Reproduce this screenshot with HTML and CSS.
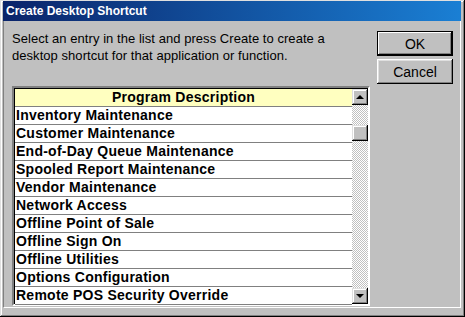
FILE: index.html
```html
<!DOCTYPE html>
<html lang="en">
<head>
    <meta charset="UTF-8">
    <title>Create Desktop Shortcut</title>
    <link rel="stylesheet" href="styles.css">
</head>
<body>
    <!-- Dialog Window -->
    <div class="window">
        <div class="title-bar">Create Desktop Shortcut</div>

        <div class="client">
            <div class="left-col">
                <p class="intro">Select an entry in the list and press Create to create a desktop shortcut for that application or function.</p>

                <!-- Program List -->
                <div class="list-box">
                    <div class="list-rows">
                        <div class="list-header">Program Description</div>
                        <div class="list-row">Inventory Maintenance</div>
                        <div class="list-row">Customer Maintenance</div>
                        <div class="list-row">End-of-Day Queue Maintenance</div>
                        <div class="list-row">Spooled Report Maintenance</div>
                        <div class="list-row">Vendor Maintenance</div>
                        <div class="list-row">Network Access</div>
                        <div class="list-row">Offline Point of Sale</div>
                        <div class="list-row">Offline Sign On</div>
                        <div class="list-row">Offline Utilities</div>
                        <div class="list-row">Options Configuration</div>
                        <div class="list-row">Remote POS Security Override</div>
                    </div>
                    <div class="scrollbar">
                        <div class="scroll-btn"><span class="arrow-up"></span></div>
                        <div class="scroll-track">
                            <div class="scroll-thumb"></div>
                        </div>
                        <div class="scroll-btn"><span class="arrow-down"></span></div>
                    </div>
                </div>
            </div>

            <!-- Buttons -->
            <div class="right-col">
                <button class="btn btn-default">OK</button>
                <button class="btn">Cancel</button>
            </div>
        </div>
    </div>
</body>
</html>
```

FILE: styles.css
```css
/* Base Reset */
* {
    margin: 0;
    padding: 0;
    box-sizing: border-box;
}

body {
    font-family: "Liberation Sans", Arial, sans-serif;
    font-size: 13px;
    color: #000;
    background-color: #c0c0c0;
}

/* Window Frame */
.window {
    width: 465px;
    height: 317px;
    display: flex;
    flex-direction: column;
    padding: 1px 4px 9px 3px;
    background-color: #c0c0c0;
    box-shadow: inset -1px -1px #000, inset 1px 1px #dfdfdf,
                inset -2px -2px #808080, inset 2px 2px #fff;
}

.title-bar {
    height: 20px;
    padding: 3px 0 0 3px;
    color: #fff;
    font-weight: bold;
    font-size: 12px;
    background: linear-gradient(to right, #0a246a, #1a7fd4);
}

.client {
    flex: 1;
    display: flex;
    gap: 7px;
    padding: 9px 0 0 8px;
    border-left: 1px solid #808080;
    border-right: 1px solid #fff;
    border-bottom: 1px solid #fff;
}

/* Left Column */
.left-col {
    width: 358px;
}

.intro {
    line-height: 17px;
    letter-spacing: 0.05px;
    margin-bottom: 22px;
}

.list-box {
    height: 220px;
    display: flex;
    background-color: #fff;
    border: 2px solid;
    border-color: #808080 #fff #fff #808080;
    box-shadow: inset 1px 1px #000;
}

.list-rows {
    flex: 1;
    padding: 1px 0 0 1px;
}

.list-header {
    height: 18px;
    line-height: 17px;
    text-align: center;
    font-size: 14px;
    letter-spacing: 0.25px;
    font-weight: bold;
    background-color: #ffffc0;
    border-bottom: 1px solid #808080;
}

.list-row {
    height: 18px;
    line-height: 17px;
    padding-left: 1px;
    font-size: 14px;
    letter-spacing: 0.25px;
    font-weight: bold;
    border-bottom: 1px solid #808080;
}

/* Scrollbar */
.scrollbar {
    width: 16px;
    display: flex;
    flex-direction: column;
    padding-top: 1px;
}

.scroll-btn {
    height: 16px;
    display: flex;
    align-items: center;
    justify-content: center;
    background-color: #c0c0c0;
    box-shadow: inset -1px -1px #000, inset 1px 1px #dfdfdf,
                inset -2px -2px #808080, inset 2px 2px #fff;
}

.arrow-up {
    border-left: 4px solid transparent;
    border-right: 4px solid transparent;
    border-bottom: 4px solid #000;
}

.arrow-down {
    border-left: 4px solid transparent;
    border-right: 4px solid transparent;
    border-top: 4px solid #000;
}

.scroll-track {
    flex: 1;
    padding-top: 20px;
    background: repeating-conic-gradient(#c0c0c0 0 25%, #fff 0 50%) 0 0 / 2px 2px;
}

.scroll-thumb {
    height: 16px;
    background-color: #c0c0c0;
    box-shadow: inset -1px -1px #000, inset 1px 1px #dfdfdf,
                inset -2px -2px #808080, inset 2px 2px #fff;
}

/* Buttons */
.right-col {
    width: 76px;
    display: flex;
    flex-direction: column;
    gap: 3px;
    padding-top: 1px;
}

.btn {
    height: 25px;
    font-family: "Liberation Sans", Arial, sans-serif;
    font-size: 14px;
    color: #000;
    background-color: #c0c0c0;
    border: none;
    box-shadow: inset -1px -1px #000, inset 1px 1px #fff,
                inset -2px -2px #808080, inset 2px 2px #dfdfdf;
}

.btn-default {
    border: 1px solid #000;
    box-shadow: inset -1px -1px #000, inset 1px 1px #fff,
                inset -2px -2px #808080;
}
```
